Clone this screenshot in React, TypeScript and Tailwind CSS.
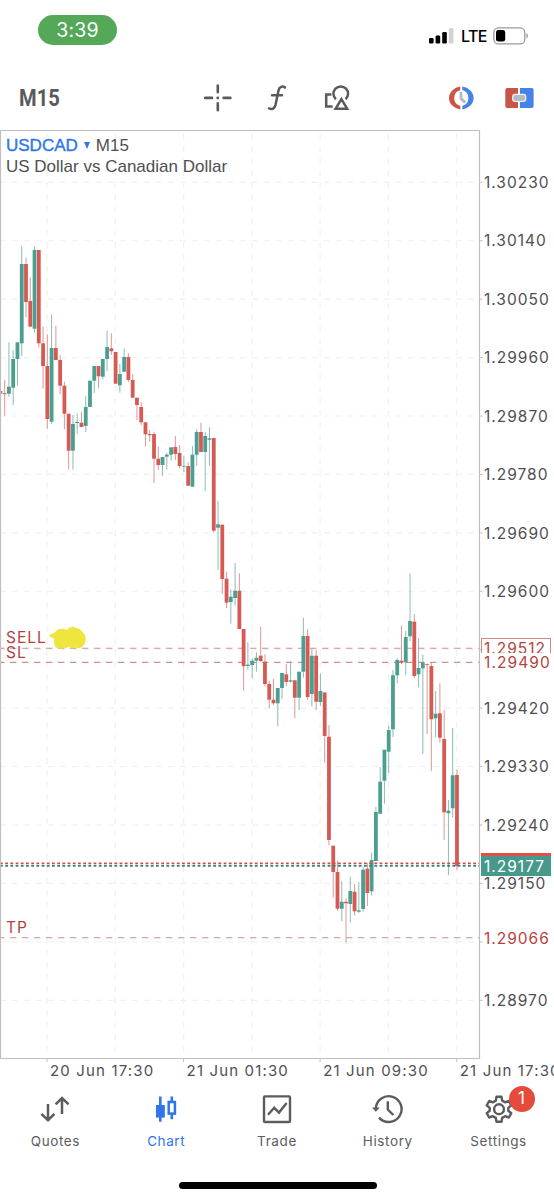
import React from "react";

// [direction, high, body top, body bottom, low]
type Candle = ["u" | "d", number, number, number, number];

const candles: Candle[] = [
  ["d", 391, 391, 393.7, 393.7],
  ["d", 380, 393.2, 394.2, 416],
  ["u", 342.3, 386.7, 393.7, 396.7],
  ["u", 350, 359, 387.7, 405],
  ["u", 342.3, 342.3, 359, 385.7],
  ["u", 246, 264, 343.3, 356],
  ["d", 257.7, 264, 302, 317.3],
  ["d", 277.3, 301, 326.7, 326.7],
  ["u", 246.7, 250, 328.7, 332.7],
  ["d", 250, 250, 343.3, 347.3],
  ["d", 326.7, 343.3, 366, 388.7],
  ["d", 334.3, 366, 419, 429],
  ["u", 314.3, 348, 421.7, 424],
  ["d", 325.7, 348, 360, 360],
  ["d", 355, 360, 385.7, 394.3],
  ["d", 381.7, 385.7, 413.7, 429.3],
  ["d", 413.7, 413.7, 450.7, 469.7],
  ["u", 415, 424, 450.7, 469.7],
  ["u", 413.7, 422, 423, 434],
  ["d", 411.7, 422.7, 427, 427],
  ["u", 395.7, 407, 426, 432],
  ["u", 380.7, 380.7, 407, 407],
  ["u", 366, 366, 380.7, 393],
  ["d", 366, 366, 376.3, 388.3],
  ["u", 359, 359, 376.7, 379.3],
  ["u", 330.7, 347, 359, 371],
  ["d", 333.3, 348.3, 351.3, 355],
  ["d", 352, 352, 383.7, 383.7],
  ["u", 364, 374, 385.3, 392.7],
  ["u", 348.3, 357, 371.7, 371.7],
  ["d", 353.3, 357, 380, 381.7],
  ["d", 374.3, 380, 397.7, 397.7],
  ["d", 397.7, 397.7, 405, 420],
  ["d", 402.3, 407, 422.3, 425.3],
  ["d", 422.3, 422.3, 434.3, 446.3],
  ["d", 430, 434, 435.2, 441.7],
  ["d", 431.7, 434, 458.7, 483.3],
  ["d", 446.7, 458.7, 465, 469.7],
  ["u", 457, 457, 465, 476],
  ["u", 453, 454.7, 456.7, 469.3],
  ["u", 447.3, 447.3, 454.7, 460.7],
  ["d", 436, 447, 454, 460],
  ["d", 445, 453, 466, 468.3],
  ["u", 455.7, 465.8, 466.6, 472],
  ["d", 462.3, 466, 485.7, 485.7],
  ["u", 446, 454.7, 486.7, 486.7],
  ["u", 429, 432, 454.7, 465.7],
  ["d", 422.7, 432, 452, 452],
  ["u", 431.7, 436, 452, 491],
  ["u", 427.3, 438.3, 439.8, 465.7],
  ["d", 438, 438, 530.7, 532.7],
  ["u", 501, 524.3, 527.7, 570],
  ["d", 524.7, 524.7, 579, 594],
  ["d", 571.7, 578.7, 602.7, 608],
  ["u", 589.3, 596.7, 602, 623.7],
  ["u", 563, 590.7, 598, 605.7],
  ["d", 573.3, 590.7, 629, 629],
  ["d", 629, 629, 666.3, 690.7],
  ["u", 642.3, 664.7, 666, 669.7],
  ["u", 658.3, 660.7, 665, 678],
  ["u", 652.3, 657.7, 660.7, 671.7],
  ["d", 626.7, 655.7, 661, 662],
  ["d", 654.3, 661.7, 684, 686.3],
  ["d", 680.7, 684, 699.7, 708.3],
  ["d", 679, 699.7, 703.3, 705],
  ["u", 688, 688, 703.3, 726.3],
  ["u", 673, 673, 688, 699],
  ["d", 664, 674.3, 682, 686],
  ["u", 661.3, 680.3, 681.7, 682.7],
  ["d", 680.3, 680.3, 697.7, 718.3],
  ["u", 671.7, 671.7, 697.7, 710],
  ["u", 617.7, 636, 671.7, 677.7],
  ["d", 629, 636, 697, 699.7],
  ["u", 649, 655.7, 694, 706.3],
  ["d", 650, 655.7, 701.7, 710],
  ["u", 673.3, 691, 702, 706],
  ["d", 692.5, 692.5, 736, 762.7],
  ["d", 725, 736.7, 840, 845.3],
  ["d", 845.7, 845.7, 872, 897.7],
  ["d", 860.7, 872, 908.7, 910.7],
  ["u", 881, 901.7, 908.7, 921.3],
  ["d", 898.3, 901.7, 903.3, 943.3],
  ["u", 876.7, 891, 904, 922.7],
  ["d", 884, 891.7, 911.3, 915.3],
  ["u", 882.3, 910.3, 911.7, 913],
  ["u", 866.7, 869.7, 909, 911.7],
  ["d", 863, 868.7, 893, 906],
  ["u", 852.7, 860, 891.3, 895.7],
  ["u", 807, 812, 861, 861],
  ["u", 767, 781.7, 813.7, 813.7],
  ["u", 749.7, 749.7, 780.7, 803.7],
  ["u", 726, 730, 751.7, 773],
  ["u", 670, 675.3, 729.3, 737],
  ["u", 658.3, 660, 675.3, 683.3],
  ["d", 625.7, 660.7, 662.7, 664.3],
  ["u", 631, 637, 662.3, 675],
  ["u", 573.3, 621, 636.3, 641],
  ["d", 614, 621.7, 676, 678.3],
  ["u", 638, 668, 674.3, 687.3],
  ["u", 654.7, 662.7, 668.3, 754],
  ["d", 663.5, 664, 664.8, 734],
  ["d", 662, 666, 719.3, 771],
  ["u", 691, 713.7, 718.3, 737.3],
  ["d", 683.3, 713.3, 737.7, 742.7],
  ["d", 710, 739, 812.3, 840],
  ["u", 800, 810.7, 813.3, 875],
  ["u", 728, 775.3, 808.3, 817.3],
  ["d", 769.3, 775, 866, 870],
];

// empty entries are hidden behind an order level
const prices = [
  "1.30230",
  "1.30140",
  "1.30050",
  "1.29960",
  "1.29870",
  "1.29780",
  "1.29690",
  "1.29600",
  "",
  "1.29420",
  "1.29330",
  "1.29240",
  "1.29150",
  "",
  "1.28970",
];

const times = ["20 Jun 17:30", "21 Jun 01:30", "21 Jun 09:30", "21 Jun 17:30"];

const gridX = [47, 115.3, 183.6, 251.9, 320.1, 388.4, 456.7];
const gridY = prices.map((_, i) => 182.3 + i * 58.43);

function CandleChart() {
  return (
    <svg className="block h-[932px] w-[484px]" viewBox="0 130 484 932" fill="none">
      <g stroke="#f1f1f3" strokeWidth="1.2" strokeDasharray="6 6">
        {gridX.map((x) => (
          <line key={x} x1={x} y1="134" x2={x} y2="1058" />
        ))}
        {gridY.map((y) => (
          <line key={y} x1="0" y1={y} x2="479" y2={y} />
        ))}
      </g>
      <g stroke="#cd8f8b" strokeWidth="1.1" strokeDasharray="6.4 5.6" strokeDashoffset="2">
        <line x1="0" y1="648.3" x2="479" y2="648.3" />
        <line x1="0" y1="662.4" x2="479" y2="662.4" />
        <line x1="0" y1="937.7" x2="479" y2="937.7" />
      </g>
      {candles.map(([dir, high, top, bottom, low], i) => {
        const x = 0.4 + i * 4.267;
        const up = dir === "u";
        return (
          <g key={i}>
            <line x1={x} y1={high} x2={x} y2={low} stroke={up ? "#7fb5aa" : "#d98c88"} strokeWidth="0.9" />
            <rect x={x - 1.9} y={top} width="3.8" height={bottom - top} fill={up ? "#4b9f90" : "#d65a54"} />
          </g>
        );
      })}
      <g strokeWidth="1.7" strokeDasharray="2.8 2.4">
        <line x1="0" y1="863.3" x2="479" y2="863.3" stroke="#c9504a" />
        <line x1="0" y1="865.8" x2="479" y2="865.8" stroke="#3d8277" />
      </g>
      <path d="M0.5 130.5H479.5V1058.5H0.5Z" stroke="#bfbfc1" strokeWidth="1.2" />
      <g stroke="#bfbfc1">
        {gridY.map((y) => (
          <line key={y} x1="480" y1={y} x2="482.5" y2={y} />
        ))}
        {[47, 183.6, 320.1, 456.7].map((x) => (
          <line key={x} x1={x} y1="1058" x2={x} y2="1062" />
        ))}
      </g>
    </svg>
  );
}

function StatusBar() {
  return (
    <div className="flex h-[60px] items-start justify-between pl-[38px] pr-[25px] pt-[15px]">
      <div className="flex h-[30px] w-[79px] items-center justify-center rounded-full bg-[#54a857] pt-px text-[19.5px] tracking-[0.2px] text-white">
        3:39
      </div>
      <div className="flex h-[41px] items-center text-black">
        <svg className="h-4 w-[25px]" viewBox="0 0 25 16">
          <rect x="0" y="10" width="4.6" height="5.5" rx="1.2" />
          <rect x="6.6" y="7.5" width="4.6" height="8" rx="1.2" />
          <rect x="13.2" y="4" width="4.6" height="11.5" rx="1.2" />
          <rect x="19.8" y="0" width="4.6" height="15.5" rx="1.2" fill="#d2d2d2" />
        </svg>
        <span className="ml-[7px] w-[26px] text-[16px] font-medium leading-none tracking-[-0.6px]">LTE</span>
        <svg className="ml-[6px] h-[18px] w-[36px]" viewBox="0 0 36 18" fill="none">
          <rect x="0.8" y="0.8" width="31" height="16" rx="4.6" stroke="#9b9b9b" strokeWidth="1.3" />
          <rect x="3" y="3" width="9.2" height="11.6" rx="2.4" fill="#000" />
          <path d="M33.4 6.2C35.4 7 35.4 10.6 33.4 11.4Z" fill="#9b9b9b" />
        </svg>
      </div>
    </div>
  );
}

function Toolbar() {
  return (
    <div className="flex h-[70px] items-center pl-[19px] pt-[6px] text-[#5a5a5c]">
      <span className="w-[184px] origin-left scale-x-[0.84] font-['Roboto'] text-[24px] font-bold leading-none">M15</span>
      <svg className="h-[30px] w-[30px]" viewBox="0 0 30 30" stroke="currentColor" strokeWidth="2.6" strokeLinecap="round">
        <path d="M14.8 2.5V9.2M14.8 20.4V27.2M2.2 14.9H9M20.6 14.9H27.4M14.7 14.9H14.9" />
      </svg>
      <svg className="ml-[32px] h-[30px] w-[24px]" viewBox="0 0 24 30" fill="none" stroke="currentColor" strokeWidth="2.5" strokeLinecap="round">
        <path d="M20 4.6C17.7 2.8 14.3 3.4 13.5 7.4L10.6 21.6C9.7 25.4 7 27.2 4 25.3M7 12.2H17" />
      </svg>
      <svg className="ml-[33px] h-[30px] w-[30px]" viewBox="0 0 30 30" fill="none" stroke="currentColor" strokeWidth="2.5">
        <path d="M9.4 11.6H4.2V23.4H10.6M13.9 16.2A7.3 7.3 0 1 1 23.6 16.2M19.4 16.2L13.6 25.8H25.2Z" />
      </svg>
      <svg className="ml-[94px] h-[30px] w-[32px]" viewBox="0 0 32 30" fill="none">
        <path d="M14.3 3.6A13 11.5 0 0 0 14.3 26.4V23A8.3 8.3 0 0 1 14.3 7Z" fill="#c95549" />
        <path d="M16.3 3.6A13 11.5 0 0 1 16.3 26.4V23A8.3 8.3 0 0 0 16.3 7Z" fill="#4682e8" />
        <path d="M15 9V15.6L19.2 19.6" stroke="#b3bac1" strokeWidth="2.8" />
      </svg>
      <svg className="ml-[25px] h-[30px] w-[32px]" viewBox="0 0 32 30" fill="none">
        <path d="M15 5H4.3A2 2 0 0 0 2.3 7V23A2 2 0 0 0 4.3 25H15Z" fill="#c95549" />
        <path d="M16.9 5H28.6A2 2 0 0 1 30.6 7V23A2 2 0 0 1 28.6 25H16.9Z" fill="#4682e8" />
        <rect x="9.7" y="11.3" width="13" height="7.2" rx="2.4" fill="#b3bac1" stroke="#f4f4f6" strokeWidth="1.2" />
      </svg>
    </div>
  );
}

function ChartPanel() {
  return (
    <div className="relative flex h-[928px] text-[#4f4f52]">
      <div className="h-[928px] w-[484px]">
        <CandleChart />
      </div>
      <div className="flex flex-col pt-[24px] text-[15.5px] tracking-[1px]">
        {prices.map((p, i) => (
          <div key={i} className="h-[58.43px] leading-[58px]">
            {p}
          </div>
        ))}
      </div>

      <div className="absolute left-[6px] top-[5px] font-['Liberation_Sans'] text-[17px] leading-[21px]">
        <div className="flex items-center">
          <span className="text-[#2f78e8] [-webkit-text-stroke:0.4px_#2f78e8]">USDCAD</span>
          <span className="mx-[6px] h-0 w-0 border-x-[3.5px] border-t-[7px] border-x-transparent border-t-[#2f78e8]" />
          <span>M15</span>
        </div>
        <div>US Dollar vs Canadian Dollar</div>
      </div>

      <div className="absolute left-[6px] top-[501px] text-[15.5px] leading-[14.5px] tracking-[1px] text-[#b2443e]">
        <div>SELL</div>
        <div>SL</div>
      </div>
      <div className="absolute left-[6px] top-[789px] text-[15.5px] leading-[18px] tracking-[1px] text-[#b2443e]">TP</div>
      <svg className="absolute left-[48px] top-[495px] h-[26px] w-[40px]" viewBox="0 0 40 26">
        <path
          d="M1 10.5C3 8.5 5.5 9.2 7.5 6.8C9.5 3.5 15 2.5 19 5.2C21 1.6 25 0.5 28 3C31 2.5 33 5.5 34.5 7C38.5 10 38.5 16 36.5 19C34.5 23 31 24 28.5 22.5C26 24 22.5 23.5 20.5 21.5C18 23.5 12 24.5 8.5 22.8C6 21 5.8 17.5 6.2 14C4.5 12.5 2 12.5 1 10.5Z"
          fill="#eee63f"
        />
      </svg>

      <div className="absolute left-[481px] top-[508px] h-[15px] w-[70px] overflow-hidden border border-b-0 border-[#cf8984] pl-[2px] text-[15.5px] leading-[19px] tracking-[1px] text-[#b2443e]">
        1.29512
      </div>
      <div className="absolute left-[484px] top-[523px] text-[15.5px] leading-[19px] tracking-[1.1px] text-[#b2443e]">1.29490</div>
      <div className="absolute left-[481px] top-[723px] h-[23px] w-[70px] border-t-[3px] border-[#e0504a] bg-[#46998b] pl-[3px] text-[15.5px] leading-[21px] tracking-[1px] text-white">
        1.29177
      </div>
      <div className="absolute left-[484px] top-[799px] text-[15.5px] leading-[19px] tracking-[1px] text-[#b2443e]">1.29066</div>
    </div>
  );
}

function Tab({ label, active, children }: { label: string; active?: boolean; children: React.ReactNode }) {
  return (
    <div className={`flex w-[111px] flex-col items-center ${active ? "text-[#2f76ee]" : "text-[#5c5c5e]"}`}>
      {children}
      <span className="mt-[6px] text-[13.5px] leading-[20px] tracking-[0.6px]">{label}</span>
    </div>
  );
}

const icon = "h-[32px] w-[32px]";

function TabBar() {
  return (
    <div className="flex h-[86px] pt-[8px]">
      <Tab label="Quotes">
        <svg className={icon} viewBox="0 0 32 32" fill="none" stroke="currentColor" strokeWidth="2.5">
          <path d="M9 11V27M2.4 20.8L9 27.2L15.4 20.8M23 21V5.4M16.6 11.4L23 5L29.6 11.4" />
        </svg>
      </Tab>
      <Tab label="Chart" active>
        <svg className={icon} viewBox="0 0 32 32" fill="none" stroke="currentColor">
          <path d="M10.3 3.5V28.7M21.8 3.5V8.5M21.8 21V26.3" strokeWidth="2.6" />
          <rect x="6" y="12" width="8.8" height="12.6" fill="currentColor" stroke="none" />
          <rect x="18.7" y="9" width="6.2" height="11.6" strokeWidth="2.5" />
        </svg>
      </Tab>
      <Tab label="Trade">
        <svg className={icon} viewBox="0 0 32 32" fill="none" stroke="currentColor" strokeWidth="2.4">
          <rect x="3" y="3.4" width="26" height="25.6" rx="1" />
          <path d="M7 21.8L13.2 14.8L18 19.6L25.6 10" />
        </svg>
      </Tab>
      <Tab label="History">
        <svg className={icon} viewBox="0 0 32 32" fill="none" stroke="currentColor" strokeWidth="2.4">
          <path d="M3.8 15.6A12.9 12.9 0 1 1 7 24.6M15.8 8.2V16.6L21.4 22" />
          <path d="M0 14.4H7.8L3.8 18.8Z" fill="currentColor" stroke="none" />
        </svg>
      </Tab>
      <Tab label="Settings">
        <div className="relative">
          <svg className={icon} viewBox="0 0 32 32" fill="none" stroke="currentColor" strokeWidth="2.4" strokeLinejoin="round">
            <path d="M13.5 3.8H18.5L19.2 7.6L22.1 9.3L25.8 8L28.3 12.3L25.3 14.8V17.8L28.3 20.2L25.8 24.5L22.1 23.2L19.2 24.9L18.5 28.7H13.5L12.8 24.9L9.9 23.2L6.2 24.5L3.7 20.2L6.7 17.8V14.8L3.7 12.3L6.2 8L9.9 9.3L12.8 7.6Z" />
            <circle cx="16" cy="16.2" r="4.9" />
          </svg>
          <span className="absolute -top-[7px] left-[26px] flex h-[26px] w-[26px] items-center justify-center rounded-full bg-[#e64a3b] text-[17px] text-white">
            1
          </span>
        </div>
      </Tab>
    </div>
  );
}

function App() {
  return (
    <div className="flex h-[1200px] w-[554px] flex-col overflow-hidden bg-white font-['Inter',sans-serif]">
      <StatusBar />
      <Toolbar />
      <ChartPanel />
      <div className="flex h-[27px] pl-[50px] pt-[2px] text-[15px] leading-[21px] tracking-[1.15px] text-[#4f4f52]">
        {times.map((t) => (
          <span key={t} className="w-[136.6px] shrink-0 whitespace-nowrap">
            {t}
          </span>
        ))}
      </div>
      <TabBar />
      <div className="mt-[11px] flex justify-center pl-px">
        <div className="h-[7px] w-[198px] rounded-full bg-black" />
      </div>
    </div>
  );
}

export default App;
